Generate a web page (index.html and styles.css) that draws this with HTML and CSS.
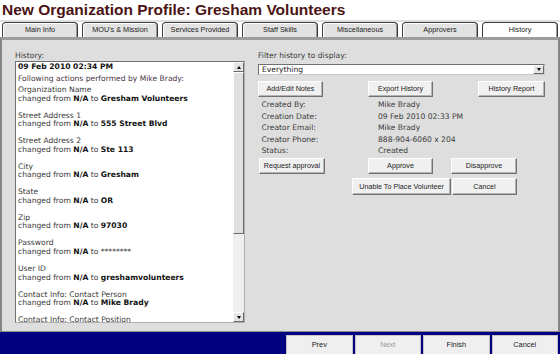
FILE: index.html
```html
<!DOCTYPE html>
<html lang="en">
<head>
  <meta charset="UTF-8">
  <meta name="viewport" content="width=device-width, initial-scale=1">
  <title>New Organization Profile</title>
  <link rel="stylesheet" href="styles.css">
</head>
<body>
  <h1 class="title">New Organization Profile: Gresham Volunteers</h1>
  <div class="tabs">
    <div class="tab">Main Info</div>
    <div class="tab">MOU's &amp; Mission</div>
    <div class="tab">Services Provided</div>
    <div class="tab">Staff Skills</div>
    <div class="tab">Miscellaneous</div>
    <div class="tab">Approvers</div>
    <div class="tab active">History</div>
  </div>
  <div class="panel">
    <div class="history-col">
      <div class="label">History:</div>
      <div class="history-box">
        <div class="history-text">
          <div class="when">09 Feb 2010 02:34 PM</div>
          <div class="who">Following actions performed by Mike Brady:</div>
          <div class="entry">Organization Name<br>changed from <b>N/A</b> to <b>Gresham Volunteers</b></div>
          <div class="entry">Street Address 1<br>changed from <b>N/A</b> to <b>555 Street Blvd</b></div>
          <div class="entry">Street Address 2<br>changed from <b>N/A</b> to <b>Ste 113</b></div>
          <div class="entry">City<br>changed from <b>N/A</b> to <b>Gresham</b></div>
          <div class="entry">State<br>changed from <b>N/A</b> to <b>OR</b></div>
          <div class="entry">Zip<br>changed from <b>N/A</b> to <b>97030</b></div>
          <div class="entry">Password<br>changed from <b>N/A</b> to ********</div>
          <div class="entry">User ID<br>changed from <b>N/A</b> to <b>greshamvolunteers</b></div>
          <div class="entry">Contact Info: Contact Person<br>changed from <b>N/A</b> to <b>Mike Brady</b></div>
          <div class="entry">Contact Info: Contact Position</div>
        </div>
        <div class="scrollbar">
          <div class="sb-btn"><span class="arrow-up"></span></div>
          <div class="sb-thumb"></div>
          <div class="sb-track"></div>
          <div class="sb-btn"><span class="arrow-down"></span></div>
        </div>
      </div>
    </div>
    <div class="side-col">
      <div class="label">Filter history to display:</div>
      <div class="select">
        <span class="select-text">Everything</span>
        <span class="select-btn"><span class="arrow-down"></span></span>
      </div>
      <div class="btn-row spread">
        <div class="btn">Add/Edit Notes</div>
        <div class="btn">Export History</div>
        <div class="btn wide">History Report</div>
      </div>
      <div class="info">
        <div>Created By:</div><div>Mike Brady</div>
        <div>Creation Date:</div><div>09 Feb 2010 02:33 PM</div>
        <div>Creator Email:</div><div>Mike Brady</div>
        <div>Creator Phone:</div><div>888-904-6060 x 204</div>
        <div>Status:</div><div>Created</div>
      </div>
      <div class="btn-row approve-row">
        <div class="btn request">Request approval</div>
        <div class="btn approve">Approve</div>
        <div class="btn disapprove">Disapprove</div>
      </div>
      <div class="btn-row cancel-row">
        <div class="btn unable">Unable To Place Volunteer</div>
        <div class="btn cancel">Cancel</div>
      </div>
    </div>
  </div>
  <div class="footer">
    <div class="nav-btn">Prev</div>
    <div class="nav-btn disabled">Next</div>
    <div class="nav-btn">Finish</div>
    <div class="nav-btn">Cancel</div>
  </div>
</body>
</html>
```

FILE: styles.css
```css
*, *::before, *::after {
  box-sizing: border-box;
}
body {
  margin: 0;
  width: 560px;
  height: 354px;
  overflow: hidden;
  background: #dedede;
  font-family: 'DejaVu Sans', Verdana, sans-serif;
  font-size: 7.6px;
  color: #3a3a3a;
}
.title {
  margin: 0 0 2px;
  padding-left: 2px;
  height: 20px;
  line-height: 20px;
  font-family: 'Liberation Sans', Arial, sans-serif;
  font-size: 15.5px;
  font-weight: bold;
  color: #4b1414;
  background: #fff;
}
.tabs {
  display: flex;
  gap: 4px;
  padding-left: 2px;
  height: 15px;
  background: #fff;
}
.tab {
  width: 76px;
  height: 15px;
  line-height: 13px;
  text-align: center;
  font-family: 'Liberation Sans', Arial, sans-serif;
  font-size: 7.3px;
  color: #222;
  background: #e2e2e2;
  border: 1px solid #3c3c3c;
  border-bottom: none;
  border-radius: 4px 4px 0 0;
  box-shadow: inset 1px 1px #fff, inset -1px 0 #9a9a9a;
}
.tab.active {
  background: #fff;
}
.panel {
  display: flex;
  height: 295px;
  border-top: 3px solid #9c9c9c;
  border-left: 2px solid #858585;
  border-right: 2px solid #858585;
  border-bottom: 1px solid #8a8a8a;
  background: #dedede;
}
.label {
  line-height: 9px;
  color: #3a3a3a;
}
.history-col {
  width: 243px;
  padding: 10.5px 0 0 13px;
}
.history-box {
  display: flex;
  margin-top: 1.5px;
  width: 230px;
  height: 262px;
  background: #fff;
  border: 1px solid #6f6f6f;
  border-right-color: #b0b0b0;
  border-bottom-color: #b0b0b0;
  overflow: hidden;
}
.history-text {
  flex: 1;
  padding-left: 2px;
  overflow: hidden;
  color: #3a3a3a;
}
.history-text b {
  color: #111;
}
.when {
  font-weight: bold;
  color: #111;
  line-height: 9px;
  margin-bottom: 3px;
}
.who {
  line-height: 9px;
  margin-bottom: 3px;
  color: #4a3446;
}
.entry {
  line-height: 8.6px;
  margin-bottom: 8.4px;
  white-space: nowrap;
}
.scrollbar {
  display: flex;
  flex-direction: column;
  width: 11px;
  background: #efefef;
}
.sb-btn {
  display: flex;
  align-items: center;
  justify-content: center;
  height: 10px;
  background: #e4e4e4;
  border: 1px solid;
  border-color: #fff #6a6a6a #6a6a6a #fff;
}
.sb-thumb {
  height: 162px;
  background: #e0e0e0;
  border: 1px solid;
  border-color: #fff #6a6a6a #6a6a6a #fff;
}
.sb-track {
  flex: 1;
}
.arrow-up {
  width: 0;
  height: 0;
  border-left: 2.5px solid transparent;
  border-right: 2.5px solid transparent;
  border-bottom: 3px solid #000;
}
.arrow-down {
  width: 0;
  height: 0;
  border-left: 2.5px solid transparent;
  border-right: 2.5px solid transparent;
  border-top: 3px solid #000;
}
.side-col {
  width: 287px;
  margin-left: 13px;
  padding-top: 10.5px;
}
.select {
  display: flex;
  align-items: center;
  margin-top: 4.5px;
  height: 11px;
  background: #fff;
  border: 1px solid #6f6f6f;
  border-right-color: #c8c8c8;
  border-bottom-color: #c8c8c8;
}
.select-text {
  flex: 1;
  padding-left: 3px;
  line-height: 9px;
  color: #222;
}
.select-btn {
  display: flex;
  align-items: center;
  justify-content: center;
  width: 11px;
  height: 9px;
  background: #e4e4e4;
  border: 1px solid;
  border-color: #fff #6a6a6a #6a6a6a #fff;
}
.btn-row {
  display: flex;
}
.btn-row.spread {
  justify-content: space-between;
  margin-top: 6px;
}
.btn {
  width: 65px;
  height: 16px;
  line-height: 14px;
  text-align: center;
  white-space: nowrap;
  font-family: 'Liberation Sans', Arial, sans-serif;
  font-size: 7.2px;
  color: #222;
  background: #f0f0f0;
  border: 1px solid;
  border-color: #fff #707070 #707070 #fff;
  box-shadow: inset -1px -1px #b4b4b4;
}
.btn.wide {
  width: 67px;
}
.info {
  display: grid;
  grid-template-columns: 116.5px 1fr;
  margin-top: 2.3px;
  padding-left: 3.5px;
  line-height: 11.4px;
  color: #3a3a3a;
}
.approve-row {
  margin-top: 2px;
}
.btn.request {
  width: 66px;
  margin-left: 1px;
}
.btn.approve {
  margin-left: 43px;
}
.btn.disapprove {
  width: 66px;
  margin-left: 18px;
}
.cancel-row {
  margin-top: 3.4px;
  padding-left: 94px;
}
.btn.unable {
  width: 99px;
  height: 17px;
  line-height: 15px;
}
.btn.cancel {
  width: 65px;
  height: 17px;
  line-height: 15px;
  margin-left: 1px;
}
.footer {
  display: flex;
  justify-content: flex-end;
  gap: 2px;
  height: 22px;
  padding: 3px 2px 0 0;
  background: #000080;
}
.nav-btn {
  width: 66.5px;
  height: 21px;
  line-height: 17px;
  text-align: center;
  font-family: 'Liberation Sans', Arial, sans-serif;
  font-size: 7.4px;
  color: #222;
  background: #efefef;
  border: 1px solid #c4c4c4;
}
.nav-btn.disabled {
  color: #9a9a9a;
}
```
